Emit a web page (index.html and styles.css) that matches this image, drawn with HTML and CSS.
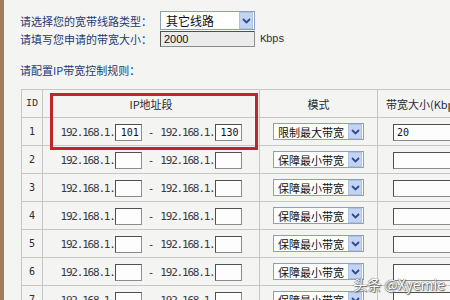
FILE: index.html
```html
<!DOCTYPE html>
<html lang="zh-CN">
<head>
    <meta charset="UTF-8">
    <title>IP带宽控制</title>
    <link rel="stylesheet" href="styles.css">
</head>
<body>

<div class="page">
    <div class="line">
        <span class="label">请选择您的宽带线路类型：</span>
        <div class="select wide"><span>其它线路</span><i class="arrow"><svg width="9" height="6" viewBox="0 0 9 6"><path d="M1 1 L4.5 4.5 L8 1" fill="none" stroke="#2b4c96" stroke-width="1.8"/></svg></i></div>
    </div>
    <div class="line small">
        <span class="label">请填写您申请的带宽大小：</span>
        <div class="field grey">2000</div>
        <span class="unit">Kbps</span>
    </div>
    <p class="note">请配置IP带宽控制规则：</p>

    <div class="rules">
        <table>
            <thead>
                <tr>
                    <th class="c-id">ID</th>
                    <th class="c-ip">IP地址段</th>
                    <th class="c-mode">模式</th>
                    <th class="c-bw">带宽大小(Kbps)</th>
                </tr>
            </thead>
            <tbody id="rows"></tbody>
        </table>
        <div class="mark"></div>
    </div>

    <div class="watermark">头条 @Xyemie</div>
</div>

<script>
    const rows = [
        { start: '101', end: '130', mode: '限制最大带宽', bw: '20' },
        { mode: '保障最小带宽' },
        { mode: '保障最小带宽' },
        { mode: '保障最小带宽' },
        { mode: '保障最小带宽' },
        { mode: '保障最小带宽' },
        { mode: '保障最小带宽' }
    ];

    const arrow = '<i class="arrow"><svg width="9" height="6" viewBox="0 0 9 6"><path d="M1 1 L4.5 4.5 L8 1" fill="none" stroke="#2b4c96" stroke-width="1.8"/></svg></i>';
    const body = document.getElementById('rows');

    rows.forEach(function (r, i) {
        const tr = document.createElement('tr');
        tr.innerHTML =
            '<td class="c-id">' + (i + 1) + '</td>' +
            '<td class="c-ip"><span class="ip">192.168.1.</span><span class="field">' + (r.start || '') + '</span>' +
            '<span class="dash">-</span><span class="ip">192.168.1.</span><span class="field">' + (r.end || '') + '</span></td>' +
            '<td class="c-mode"><div class="select"><span>' + r.mode + '</span>' + arrow + '</div></td>' +
            '<td class="c-bw"><span class="field bw">' + (r.bw || '') + '</span></td>';
        body.appendChild(tr);
    });
</script>

</body>
</html>
```

FILE: styles.css
```css
html, body {
    margin: 0;
    padding: 0;
}
body {
    width: 450px;
    height: 300px;
    overflow: hidden;
    background-color: #f4f4f3;
    font-family: "Noto Sans CJK SC", "Liberation Sans", sans-serif;
    font-size: 11px;
}
.page {
    position: relative;
    height: 300px;
    border-left: 4px solid #a07c5a;
    padding: 11px 0 0 16px;
    box-sizing: border-box;
}
.line {
    display: flex;
    align-items: center;
    height: 19px;
}
.line.small {
    height: 16px;
    margin-top: 1px;
}
.label {
    width: 140px;
    color: #253a74;
    line-height: 14px;
}
.select {
    display: flex;
    align-items: center;
    justify-content: space-between;
    width: 91px;
    height: 17px;
    box-sizing: border-box;
    border: 1px solid #8aa0c0;
    background: #fff;
    padding: 0 1px 0 4px;
    color: #111;
    font-size: 11px;
    line-height: 14px;
}
.select.wide {
    width: 95px;
    height: 19px;
    font-size: 12px;
    padding-left: 5px;
}
.arrow {
    display: flex;
    align-items: center;
    justify-content: center;
    width: 12px;
    height: 13px;
    background: #c4d3ef;
    border: 1px solid #b0c2e4;
}
.select.wide .arrow {
    height: 15px;
}
.field {
    display: inline-block;
    width: 27px;
    height: 17px;
    box-sizing: border-box;
    border: 1px solid #8c8c8c;
    border-top-color: #4f4f4f;
    border-left-color: #4f4f4f;
    background: #fdfdfd;
    font-family: "DejaVu Sans Mono", monospace;
    font-size: 10px;
    line-height: 15px;
    padding-left: 3px;
    color: #111;
    vertical-align: middle;
}
.field.grey {
    width: 95px;
    height: 16px;
    background: #ebebeb;
    line-height: 14px;
    font-family: "Liberation Sans", sans-serif;
    font-size: 11px;
}
.unit {
    margin-left: 5px;
    font-family: "Liberation Mono", monospace;
    font-size: 11px;
    letter-spacing: -0.6px;
    color: #333;
}
.note {
    margin: 16px 0 12px;
    line-height: 14px;
    color: #253a74;
}
.rules {
    position: relative;
    margin-left: 1px;
}
table {
    border-collapse: collapse;
    table-layout: fixed;
    width: 456px;
    color: #2b2b33;
}
th, td {
    border: 1px solid #c6c6c6;
    height: 28px;
    padding: 0;
    text-align: center;
    white-space: nowrap;
    box-sizing: border-box;
}
th {
    font-weight: normal;
    font-size: 11px;
}
.c-id {
    width: 21px;
    font-family: "DejaVu Sans Mono", monospace;
    font-size: 10px;
}
th.c-id {
    font-family: "Liberation Mono", monospace;
    font-size: 10px;
}
.c-ip {
    width: 217px;
}
.c-mode {
    width: 118px;
}
.c-mode .select {
    margin: 0 auto;
}
.c-bw {
    width: 100px;
    text-align: left;
}
th.c-bw {
    padding-left: 8px;
}
.ip {
    font-family: "DejaVu Sans Mono", monospace;
    font-size: 11px;
    letter-spacing: -1.2px;
    color: #3a3a42;
    vertical-align: middle;
}
.dash {
    display: inline-block;
    margin: 0 6px;
    font-family: "DejaVu Sans Mono", monospace;
    color: #333;
    vertical-align: middle;
}
.field.bw {
    width: 70px;
    margin-left: 15px;
}
.mark {
    position: absolute;
    left: 29px;
    top: 4px;
    width: 208px;
    height: 57px;
    box-sizing: border-box;
    border: 3px solid #c1252c;
}
.watermark {
    position: absolute;
    right: 5px;
    bottom: 6px;
    color: #fff;
    font-size: 14px;
    text-shadow: 0 0 1px #555, 0 0 1px #555, 1px 1px 1px #666;
}
```
